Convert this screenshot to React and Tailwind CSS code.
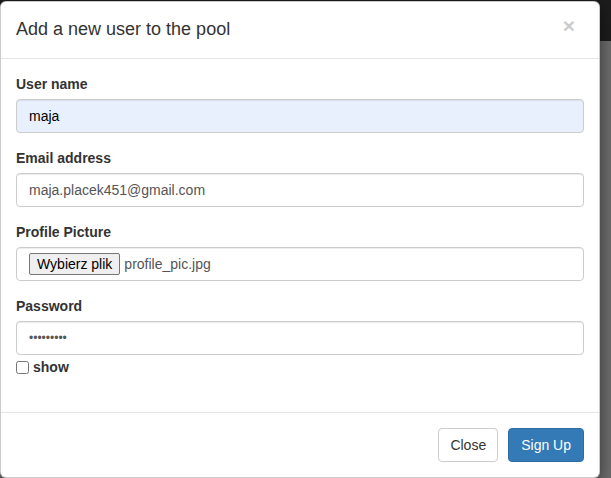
import { useState } from 'react';

const Field = ({ label, children }) => (
  <div className="mb-[15px]">
    <label className="mb-[5px] block text-[14px] font-bold leading-[20px] text-[#333]">{label}</label>
    {children}
  </div>
);

const inputCls =
  'block h-[34px] w-full rounded-[4px] border border-[#ccc] px-[12px] py-[6px] leading-[20px] text-[#555] shadow-[inset_0_1px_1px_rgba(0,0,0,0.075)] outline-none';

const App = () => {
  const [show, setShow] = useState(false);

  return (
    <div
      className="h-[478px] w-[611px] overflow-hidden bg-[linear-gradient(to_bottom,#1c1c1c_41px,#6b6b6b_41px)] pt-px"
      style={{ fontFamily: '"Liberation Sans", Arial, sans-serif' }}
    >
      <div className="w-[600px] rounded-[6px] border border-[rgba(0,0,0,0.2)] bg-white shadow-[0_5px_15px_rgba(0,0,0,0.5)]">
        {/* header */}
        <div className="flex items-start justify-between border-b border-[#e5e5e5] p-[15px]">
          <h4 className="text-[18px] leading-[1.42857] text-[#333]">Add a new user to the pool</h4>
          <button
            type="button"
            className="mr-[9px] mt-[-2px] text-[21px] font-bold leading-none text-black opacity-20 [text-shadow:0_1px_0_#fff]"
          >
            ×
          </button>
        </div>

        {/* body */}
        <div className="px-[15px] pt-[15px] pb-[19px]">
          <Field label="User name">
            <input className={`${inputCls} bg-[#e8f0fe] text-[14px] text-black`} defaultValue="maja" />
          </Field>
          <Field label="Email address">
            <input className={`${inputCls} bg-white text-[14px]`} defaultValue="maja.placek451@gmail.com" />
          </Field>
          <Field label="Profile Picture">
            <div className={`${inputCls} flex items-center bg-white py-0 text-[14px]`}>
              <span className="rounded-[2px] border border-[#767676] bg-[#efefef] px-[7px] text-[14px] leading-[20px] text-black">
                Wybierz plik
              </span>
              <span className="ml-[4px] text-[14px] text-[#555]">profile_pic.jpg</span>
            </div>
          </Field>
          <div className="mb-[15px]">
            <label className="mb-[5px] block text-[14px] font-bold leading-[20px] text-[#333]">Password</label>
            <input
              type={show ? 'text' : 'password'}
              className={`${inputCls} bg-white ${show ? 'text-[14px]' : 'text-[12px]'}`}
              defaultValue="maja12345"
            />
            <label className="mt-[3px] flex h-[20px] items-center text-[14px] font-bold text-[#333]">
              <input
                type="checkbox"
                checked={show}
                onChange={() => setShow(!show)}
                className="m-0 mr-[4px] h-[13px] w-[13px]"
              />
              show
            </label>
          </div>
        </div>

        {/* footer */}
        <div className="flex justify-end gap-[10px] border-t border-[#e5e5e5] p-[15px]">
          <button
            type="button"
            className="h-[34px] rounded-[4px] border border-[#ccc] bg-white px-[11px] text-[14px] leading-[20px] text-[#333]"
          >
            Close
          </button>
          <button
            type="button"
            className="h-[34px] rounded-[4px] border border-[#2e6da4] bg-[#337ab7] px-[12px] text-[14px] leading-[20px] text-white"
          >
            Sign Up
          </button>
        </div>
      </div>
    </div>
  );
};

export default App;
